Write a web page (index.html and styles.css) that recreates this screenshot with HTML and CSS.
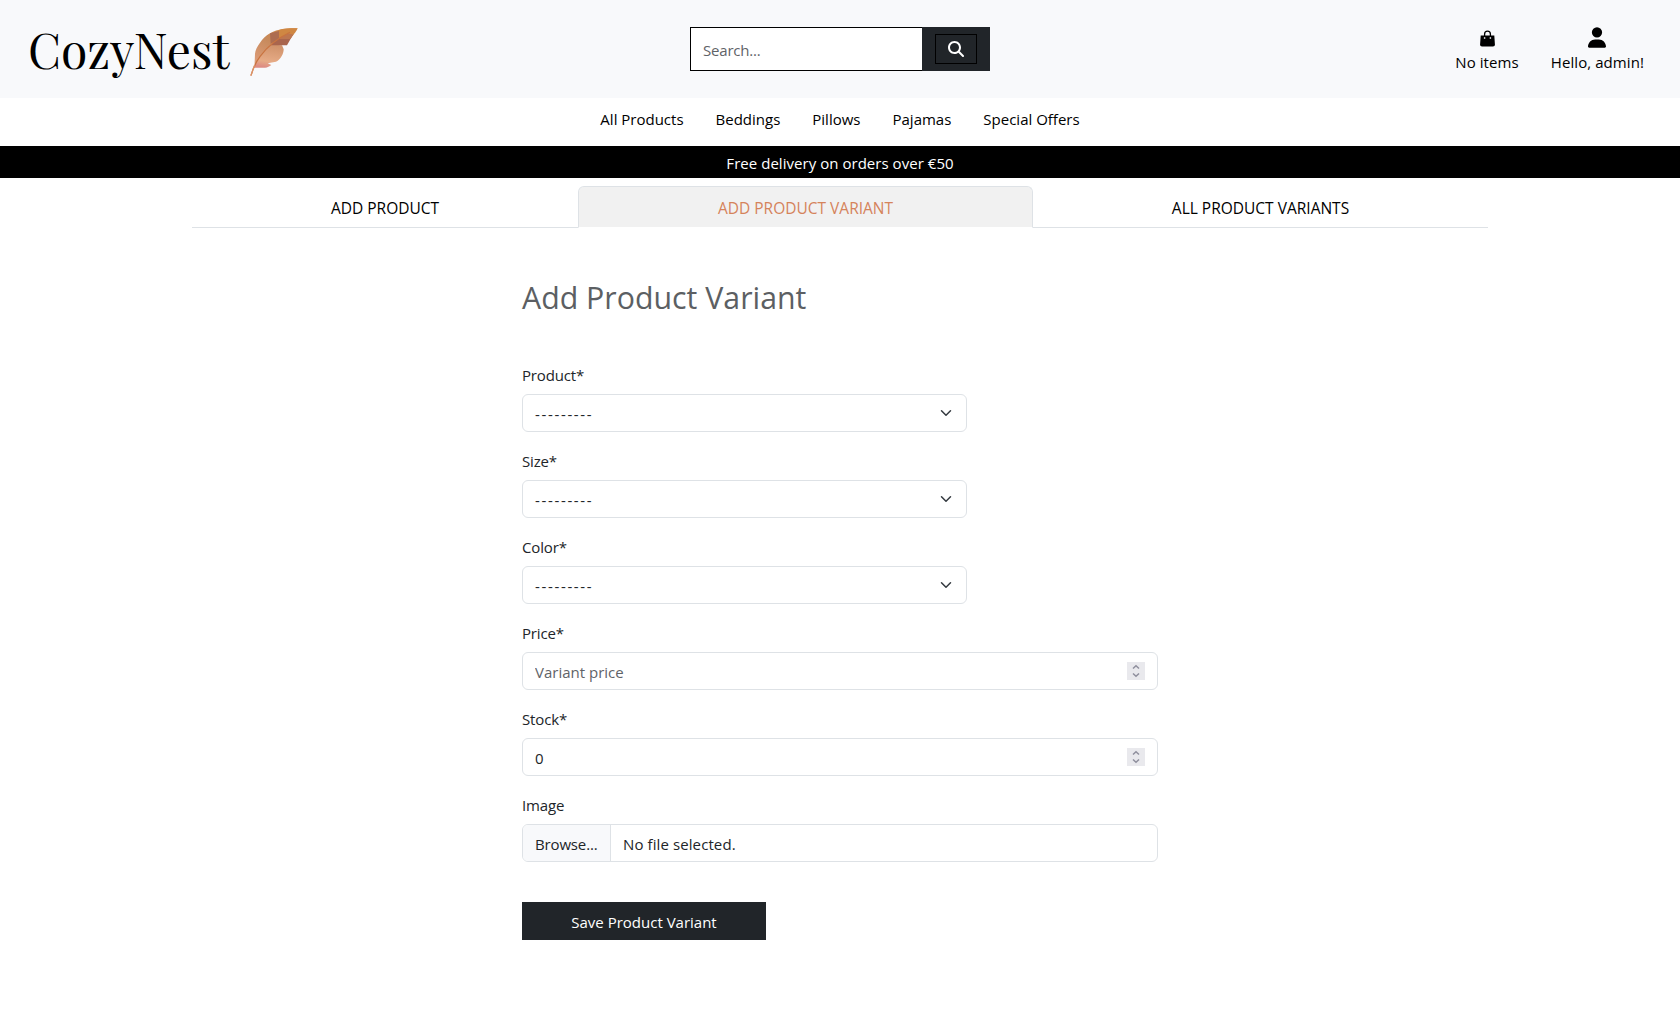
FILE: index.html
```html
<!DOCTYPE html>
<html lang="en">
<head>
<meta charset="utf-8">
<title>CozyNest - Add Product Variant</title>
<link rel="stylesheet" href="styles.css">
</head>
<body>
<header class="header">
  <a class="brand">
    <span class="brand-name">CozyNest</span>
    <svg class="brand-leaf" viewBox="0 0 48 48" width="48" height="48">
      <defs>
        <linearGradient id="leaf" x1="0.8" y1="0" x2="0.2" y2="1">
          <stop offset="0" stop-color="#cf8440"/><stop offset="0.45" stop-color="#c78a5c"/><stop offset="1" stop-color="#dd9c78"/>
        </linearGradient>
        <linearGradient id="blade" x1="0.7" y1="0" x2="0.5" y2="1">
          <stop offset="0" stop-color="#cf9169"/><stop offset="0.75" stop-color="#e6ab86"/><stop offset="1" stop-color="#dd8c83"/>
        </linearGradient>
      </defs>
      <path fill="url(#leaf)" d="M47.700.3C42 .2 38 .3 33 1 28 1.700 24 3 20 5.300 15.500 8 12.500 11 10 14.700 7 19 5.300 22 5 26L4.500 37 10 29 21.700 15.500 40 5Z"/>
      <path fill="url(#blade)" d="M4 39.700 5.500 35 10 28.700 20.700 16.500 32 17.300 33.700 21.300C33.500 24 33 26 31.700 28 30.500 30.500 28.500 32.500 26 33.700L17.700 35.300 21.300 37C19.500 38.500 17.500 39.500 15 39.700Z"/>
      <path fill="#ad6d50" d="M20 5.300 29 3 29 10.300 20.700 16Z"/>
      <path fill="#a9654d" d="M20.700 17.300 25 12.800 38 5 44 5 41.700 9 37 17.300Z"/>
      <path fill="#cf8743" d="M29 1.900C34 .4 40 .2 47.700.3 46.500 3 44.500 5.500 42.500 8L29 9.500Z"/>
      <path fill="#bd7650" d="M28 11 38 5.500 43.500 6.500 40.500 11Z"/>
      <path fill="none" stroke="#c9733f" stroke-width="1.200" stroke-linecap="round" d="M1.200 47C3 40 6 34 10 28.700 17 19 28 10 39.500 4.500"/>
      <path fill="none" stroke="#dc9367" stroke-width="1.300" stroke-linecap="round" d="M1 47.300 4.500 37.500"/>
    </svg>
  </a>
  <form class="search">
    <input class="search-input" type="text" placeholder="Search...">
    <div class="search-side">
      <button class="search-button" type="button" aria-label="Search">
        <svg viewBox="0 0 512 512" width="16" height="16"><path fill="#fff" d="M416 208c0 45.900-14.900 88.300-40 122.700L502.600 457.400c12.500 12.500 12.500 32.800 0 45.300s-32.800 12.500-45.300 0L330.700 376c-34.400 25.200-76.800 40-122.700 40C93.100 416 0 322.900 0 208S93.100 0 208 0S416 93.100 416 208zM208 352a144 144 0 1 0 0-288 144 144 0 1 0 0 288z"/></svg>
      </button>
    </div>
  </form>
  <div class="account">
    <a class="account-link">
      <svg class="bag" viewBox="0 0 15 17" width="15" height="17"><path d="M.7 5.500h13.600l.6 8.700A2 2 0 0 1 13 16.500H2a2 2 0 0 1-1.900-2.300Z"/><path fill="none" stroke="#000" stroke-width="1.300" d="M4.600 7.500V4a2.900 2.900 0 0 1 5.800 0v3.500"/><path fill="#f8f9fb" d="M3.900 7.300h1.400v1.400H3.900zM9.700 7.300h1.400v1.400H9.700z"/></svg>
      <span>No items</span>
    </a>
    <a class="account-link">
      <svg class="user" viewBox="0 0 448 512" width="18" height="21"><path d="M224 256A128 128 0 1 0 224 0a128 128 0 1 0 0 256zm-45.700 48C79.800 304 0 383.800 0 482.300C0 498.700 13.300 512 29.700 512H418.300c16.400 0 29.700-13.300 29.700-29.700C448 383.800 368.200 304 269.700 304H178.300z"/></svg>
      <span>Hello, admin!</span>
    </a>
  </div>
</header>
<nav class="nav">
  <a>All Products</a><a>Beddings</a><a>Pillows</a><a>Pajamas</a><a>Special Offers</a>
</nav>
<div class="delivery">Free delivery on orders over €50</div>
<div class="tabs">
  <a class="tab tab-first">ADD PRODUCT</a>
  <a class="tab tab-active">ADD PRODUCT VARIANT</a>
  <a class="tab">ALL PRODUCT VARIANTS</a>
</div>
<main class="content">
  <h1>Add Product Variant</h1>
  <form class="form">
    <div class="field">
      <label>Product*</label>
      <div class="control select"><span class="dashes">---------</span><svg viewBox="0 0 16 16" width="16" height="12"><path d="m2 5 6 6 6-6"/></svg></div>
    </div>
    <div class="field">
      <label>Size*</label>
      <div class="control select"><span class="dashes">---------</span><svg viewBox="0 0 16 16" width="16" height="12"><path d="m2 5 6 6 6-6"/></svg></div>
    </div>
    <div class="field">
      <label>Color*</label>
      <div class="control select"><span class="dashes">---------</span><svg viewBox="0 0 16 16" width="16" height="12"><path d="m2 5 6 6 6-6"/></svg></div>
    </div>
    <div class="field">
      <label>Price*</label>
      <div class="control number"><input type="text" placeholder="Variant price"><svg class="spinner" viewBox="0 0 18 18" width="18" height="18"><path d="m6 6.500 3-2.800 3 2.800M6 11.500l3 2.800 3-2.800"/></svg></div>
    </div>
    <div class="field">
      <label>Stock*</label>
      <div class="control number"><input type="text" value="0"><svg class="spinner" viewBox="0 0 18 18" width="18" height="18"><path d="m6 6.500 3-2.800 3 2.800M6 11.500l3 2.800 3-2.800"/></svg></div>
    </div>
    <div class="field">
      <label>Image</label>
      <div class="control file"><span class="browse">Browse...</span><span class="file-name">No file selected.</span></div>
    </div>
    <button class="save" type="button">Save Product Variant</button>
  </form>
</main>
</body>
</html>
```
FILE: styles.css
```css
* { box-sizing: border-box; }
body {
  margin: 0;
  background: #fff;
  color: #212529;
  font: 15px/24px "Open Sans", "Noto Sans", sans-serif;
}
input, button { font: inherit; color: inherit; }
input::placeholder { color: #5f6368; opacity: 1; }

.header {
  display: grid;
  grid-template-columns: 1fr 300px 1fr;
  height: 98px;
  padding: 0 36px 0 28px;
  background: #f8f9fb;
  color: #000;
}
.brand { display: flex; align-items: flex-start; }
.brand-name {
  width: 205px;
  padding-top: 19px;
  font: 48px/60px "Playfair Display", "Liberation Serif", serif;
}
.brand-leaf { margin: 28px 0 0 17px; }

.search { display: flex; width: 300px; height: 44px; margin: 27px 0 0 4px; }
.search-input {
  width: 232px;
  padding: 2px 12px 0;
  border: 1px solid #000;
  border-right: 0;
  border-radius: 0;
  background: #fff;
  outline: 0;
  letter-spacing: -0.200px;
}
.search-side {
  display: flex;
  flex: 1;
  align-items: flex-start;
  justify-content: center;
  padding-top: 7px;
  background: #212529;
}
.search-button {
  display: flex;
  align-items: center;
  justify-content: center;
  width: 42px;
  height: 30px;
  padding: 0;
  border: 1px solid #000;
  background: #212529;
}
.account { display: flex; justify-content: flex-end; gap: 32px; padding-top: 27px; }
.account-link {
  display: flex;
  flex-direction: column;
  align-items: center;
  height: 47px;
  letter-spacing: 0.080px;
}
.account-link svg { display: block; }
.account-link span { margin-top: auto; }
.bag { margin-top: 3px; }

.nav {
  display: flex;
  justify-content: center;
  gap: 32px;
  height: 48px;
  padding-top: 9px;
  color: #000;
}
.delivery {
  height: 32px;
  padding-top: 5px;
  background: #000;
  color: #fff;
  text-align: center;
  letter-spacing: 0.040px;
}
.tabs {
  display: flex;
  width: 1296px;
  height: 42px;
  margin: 8px auto 0;
  color: #000;
  font-size: 15.500px;
  text-align: center;
}
.tab { flex: 0 0 455px; padding-top: 10px; border-bottom: 1px solid #dee2e6; }
.tab-first { flex-basis: 386px; }
.tab-active {
  padding-top: 9px;
  border: 1px solid #dee2e6;
  border-bottom-color: #fff;
  border-radius: 6px 6px 0 0;
  background: #f1f1f1;
  background-clip: padding-box;
  color: #d5835b;
}

.content { width: 636px; margin: 0 auto; padding-top: 51px; }
h1 {
  margin: 0 0 45px;
  color: #5c5f63;
  font-size: 30.300px;
  font-weight: 400;
  line-height: 38px;
}
.field { margin-bottom: 16px; }
.field label { display: block; height: 24px; margin-bottom: 8px; padding-top: 1px; letter-spacing: -0.150px; }
.control {
  display: flex;
  align-items: center;
  height: 38px;
  border: 1px solid #dee2e6;
  border-radius: 6px;
  background: #fff;
}
.select { width: 445px; justify-content: space-between; padding: 0 12px; }
.select svg path { fill: none; stroke: #343a40; stroke-width: 2; stroke-linecap: round; stroke-linejoin: round; }
.dashes { padding-top: 2px; letter-spacing: 1.650px; }
.number { padding: 0 12px; }
.number input { flex: 1; min-width: 0; padding: 2px 0 0; border: 0; background: none; outline: 0; }
.spinner { background: #e9e9ed; }
.spinner path { fill: none; stroke: #8f8f9d; stroke-width: 1.500; }
.file { overflow: hidden; }
.browse { width: 88px; height: 36px; padding: 7px 0 0 12px; border-right: 1px solid #dee2e6; background: #f8f9fb; letter-spacing: -0.150px; }
.file-name { padding: 2px 0 0 12px; letter-spacing: 0.100px; }
.save {
  display: block;
  width: 244px;
  height: 38px;
  margin-top: 40px;
  padding: 2px 0 0;
  border: 0;
  background: #212529;
  color: #fff;
}
```
